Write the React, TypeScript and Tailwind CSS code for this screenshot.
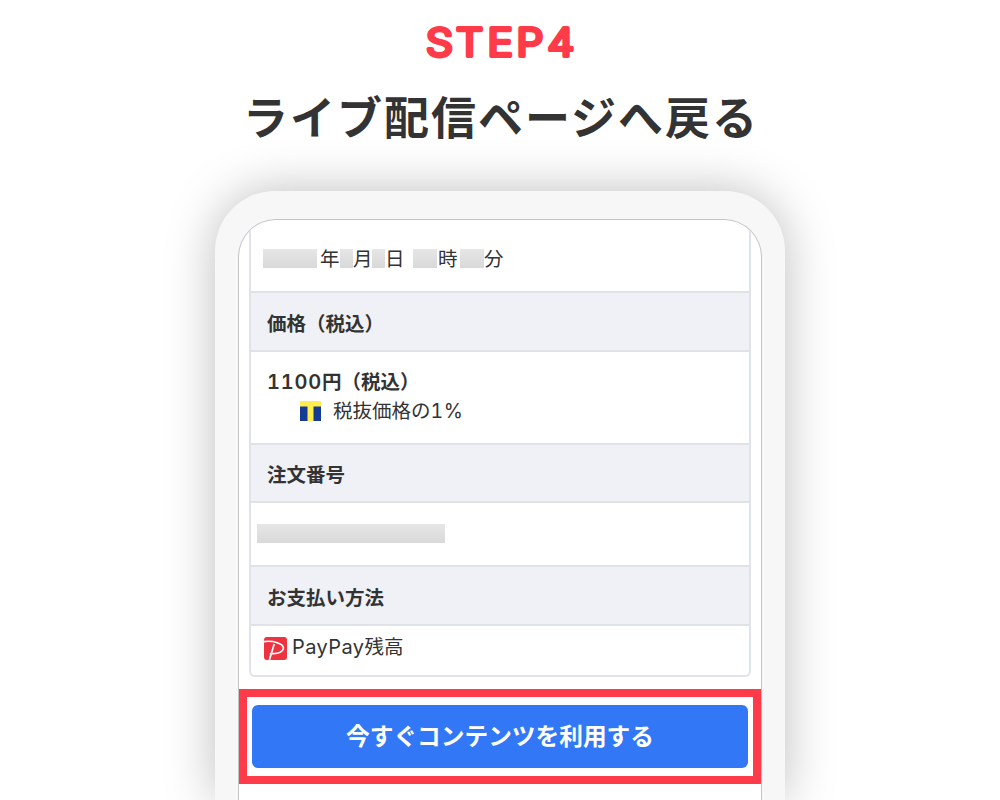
import type { ReactNode } from "react";

const STEP_LETTERS = [
  { char: "S", x: 426 },
  { char: "T", x: 456 },
  { char: "E", x: 487.5 },
  { char: "P", x: 516.5 },
  { char: "4", x: 547.5 },
];

const LETTER_STRETCH = 1.12;

function StepLabel() {
  return (
    <svg className="block h-[72px] w-[1000px]" viewBox="0 0 1000 72" role="img" aria-label="STEP4">
      <text
        x={STEP_LETTERS.map((letter) => letter.x / LETTER_STRETCH).join(" ")}
        y="56"
        transform={`scale(${LETTER_STRETCH} 1)`}
        className="fill-[#ff3b4a] stroke-[#ff3b4a] font-['Inter',sans-serif] text-[38px] font-light"
        strokeWidth="4"
        strokeLinejoin="round"
        strokeLinecap="round"
      >
        {STEP_LETTERS.map((letter) => letter.char).join("")}
      </text>
    </svg>
  );
}

function Mask({ className }: { className: string }) {
  return <span className={`block h-[19px] shrink-0 bg-linear-to-b from-[#e6e6e6] to-[#d9d9d9] ${className}`} />;
}

function HeaderRow({ className, children }: { className: string; children: ReactNode }) {
  return (
    <div
      className={`flex items-center border-t-2 border-[#dfe2e6] bg-[#eff1f6] pl-[16px] text-[19.5px] font-bold ${className}`}
    >
      {children}
    </div>
  );
}

function PointIcon() {
  return (
    <svg className="h-[20px] w-[21px] shrink-0" viewBox="0 0 21 20">
      <rect width="21" height="20" fill="#ffee4d" />
      <rect y="5.5" width="7.5" height="14.5" fill="#143c94" />
      <rect x="13.5" y="5.5" width="7.5" height="14.5" fill="#143c94" />
    </svg>
  );
}

function PayPayIcon() {
  return (
    <svg className="h-[23px] w-[23px] shrink-0" viewBox="0 0 23 23" fill="none">
      <rect width="23" height="23" rx="3" fill="#ee3340" />
      <path d="M0 4.6C9 3.4 19.8 6.4 19.4 11.2C19 15.4 13 16.8 5.8 16.8" stroke="#fff" strokeWidth="1.6" />
      <path d="M10.2 7L5.4 23" stroke="#fff" strokeWidth="1.7" />
    </svg>
  );
}

function OrderTable() {
  return (
    <div className="mx-[10px] rounded-b-[6px] border-2 border-t-0 border-[#e1e3ea] text-[19.5px]">
      <div className="flex h-[71px] items-center pt-[5px] pl-[12px]">
        <Mask className="w-[54px]" />
        <span className="ml-[3px] w-[20px]">年</span>
        <Mask className="w-[13px]" />
        <span className="w-[19px]">月</span>
        <Mask className="w-[13px]" />
        <span className="w-[28px]">日</span>
        <Mask className="w-[24px]" />
        <span className="ml-px w-[22px]">時</span>
        <Mask className="w-[24px]" />
        <span>分</span>
      </div>
      <HeaderRow className="h-[59px] pt-[3px]">価格（税込）</HeaderRow>
      <div className="flex h-[93px] flex-col border-t-2 border-[#dfe2e6] pt-[14px] pl-[16px]">
        <p className="h-[30px] leading-[29px] font-bold">
          <span className="font-['Inter'] text-[20px] font-semibold tracking-[0.8px] tabular-nums">1100</span>円（税込）
        </p>
        <div className="flex h-[29px] items-center pl-[33px] leading-[29px]">
          <PointIcon />
          <p className="ml-[12px]">
            税抜価格の<span className="font-['Inter'] tracking-[0.5px] tabular-nums">1%</span>
          </p>
        </div>
      </div>
      <HeaderRow className="h-[58px] pt-px">注文番号</HeaderRow>
      <div className="flex h-[64px] items-center border-t-2 border-[#dfe2e6] pb-[2px] pl-[6px]">
        <Mask className="w-[188px]" />
      </div>
      <HeaderRow className="h-[59px] pt-[2px]">お支払い方法</HeaderRow>
      <div className="flex h-[51px] items-center border-t-2 border-[#dfe2e6] pb-[5px] pl-[13px]">
        <PayPayIcon />
        <p className="ml-[5px] pb-[3px] leading-[26px]">
          <span className="font-['Inter'] text-[20px] tracking-[0.4px]">PayPay</span>残高
        </p>
      </div>
    </div>
  );
}

export default function App() {
  return (
    <main className="flex h-[800px] w-[1000px] flex-col items-center overflow-hidden bg-white font-['Noto_Sans_CJK_JP',sans-serif] text-[#333]">
      <StepLabel />
      <h1 className="h-[119px] pt-[12px] pl-[2px] text-[45px] leading-[64px] font-bold tracking-[2px] whitespace-nowrap">
        ライブ配信ページへ戻る
      </h1>
      <section className="h-[609px] w-[570px] shrink-0 rounded-t-[60px] bg-[#f7f7f7] px-[23px] pt-[28px] shadow-[0_0_50px_rgba(0,0,0,0.26)]">
        <div className="h-[581px] overflow-hidden rounded-t-[38px] border border-b-0 border-[#c4c4c4] bg-white">
          <OrderTable />
          <div className="mt-[12px] border-8 border-[#ff3b4a] px-[5px] py-[8px]">
            <button className="block h-[63px] w-full rounded-[6px] bg-[#3278f6] pb-px text-[23.7px] font-bold text-white">
              今すぐコンテンツを利用する
            </button>
          </div>
        </div>
      </section>
    </main>
  );
}
